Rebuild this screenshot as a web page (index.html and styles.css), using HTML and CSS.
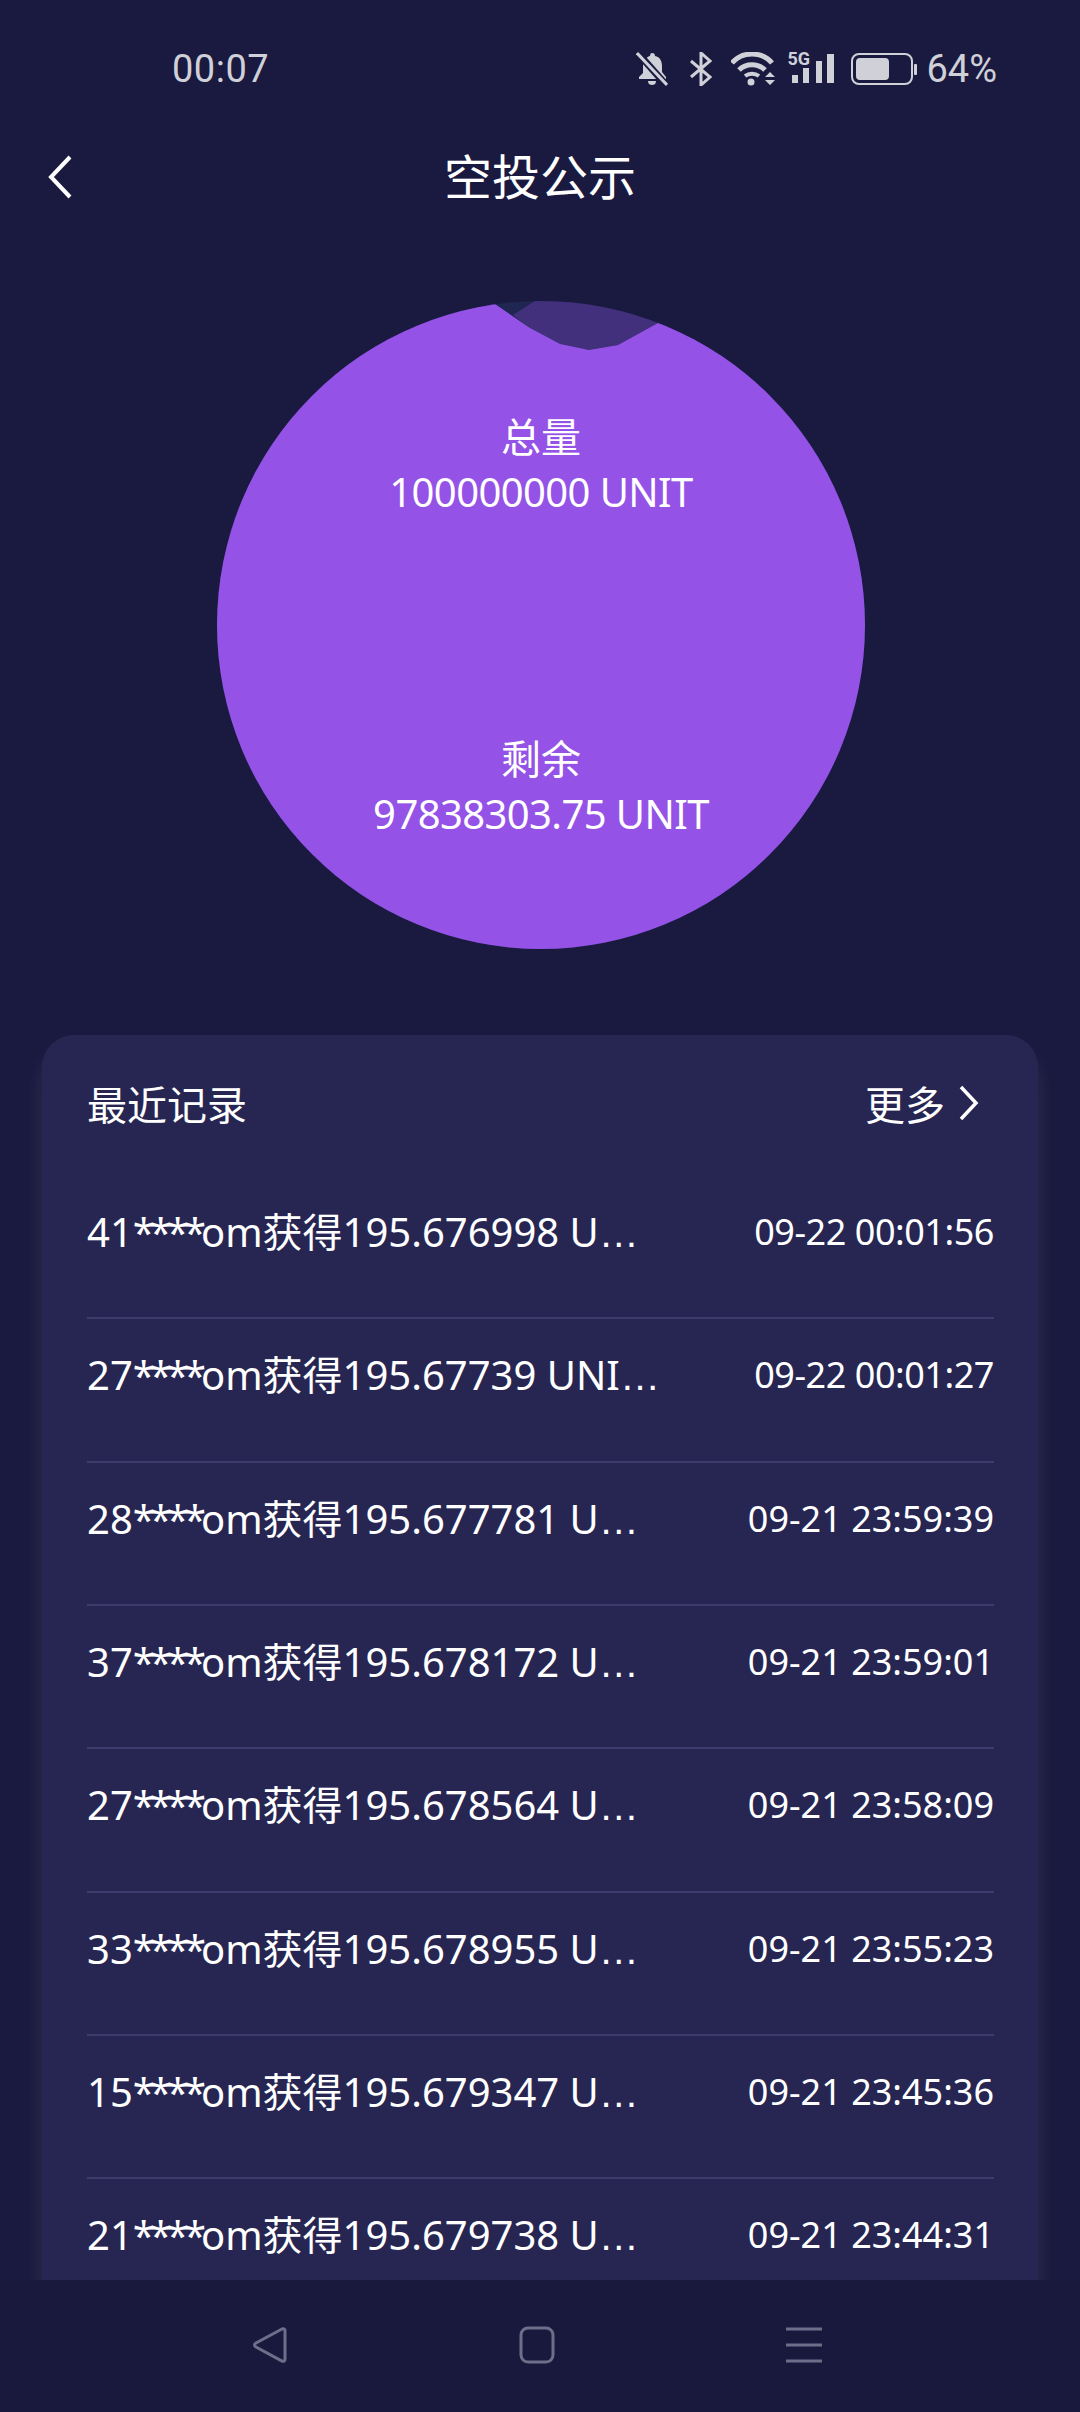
FILE: index.html

```html
<!DOCTYPE html>
<html lang="zh-CN">
<head>
    <meta charset="UTF-8">
    <meta name="viewport" content="width=device-width, initial-scale=1.0">
    <title>空投公示</title>
    <link rel="stylesheet" href="styles.css">
</head>
<body>
    <div class="status-bar">
        <span class="status-time">00:07</span>
        <div class="status-icons">
            <svg class="icon-bell" width="32" height="34" viewBox="0 0 32 34">
                <path d="M16 1c2 0 3 1 3 3 5 1 7 5 7 10v6l4 5v2H3v-2l4-4v-7c0-2 1-5 3-7 1-2 3-3 4-3 0-2 1-3 2-3z" fill="#d0d0d8"/>
                <path d="M12 29h8c0 3-2 4-4 4s-4-1-4-4z" fill="#d0d0d8"/>
                <path d="M1 0l30 34" stroke="#1a1a40" stroke-width="7"/>
                <path d="M1 1l30 32" stroke="#d0d0d8" stroke-width="3"/>
            </svg>
            <svg class="icon-bt" width="22" height="34" viewBox="0 0 22 34">
                <path d="M1 9l19 16-9 8V1l9 8L1 25" fill="none" stroke="#d0d0d8" stroke-width="3"/>
            </svg>
            <svg class="icon-wifi" width="44" height="34" viewBox="0 0 44 34">
                <path d="M1 11C11 -1 31 -1 41 11" fill="none" stroke="#d0d0d8" stroke-width="5"/>
                <path d="M8 18c7-7 19-7 26 0" fill="none" stroke="#d0d0d8" stroke-width="5"/>
                <path d="M14 24c4-3 10-3 14 0" fill="none" stroke="#d0d0d8" stroke-width="4"/>
                <circle cx="20" cy="30" r="3.5" fill="#d0d0d8"/>
                <path d="M34 25l5-5 5 5zM34 28l5 5 5-5z" fill="#d0d0d8"/>
            </svg>
            <div class="signal">
                <span class="signal-label">5G</span>
                <svg width="47" height="32" viewBox="0 0 47 32">
                    <rect x="5" y="22" width="6" height="8" fill="#d0d0d8"/>
                    <rect x="16" y="15" width="6" height="15" fill="#d0d0d8"/>
                    <rect x="29" y="8" width="6" height="22" fill="#d0d0d8"/>
                    <rect x="40" y="1" width="7" height="29" fill="#d0d0d8"/>
                </svg>
            </div>
            <svg class="icon-battery" width="67" height="32" viewBox="0 0 67 32">
                <rect x="1" y="1" width="60" height="30" rx="7" fill="none" stroke="#d0d0d8" stroke-width="2"/>
                <rect x="5" y="5" width="33" height="22" rx="4" fill="#d0d0d8"/>
                <rect x="63" y="11" width="3" height="11" rx="1" fill="#d0d0d8"/>
            </svg>
            <span class="status-percent">64%</span>
        </div>
    </div>

    <header class="title-bar">
        <svg class="back" width="26" height="44" viewBox="0 0 26 44">
            <path d="M23 2L4 22l19 20" fill="none" stroke="#fff" stroke-width="4"/>
        </svg>
        <h1>空投公示</h1>
    </header>

    <main class="page">
        <section class="chart">
            <svg class="chart-pie" width="648" height="648" viewBox="0 0 648 648">
                <circle cx="324" cy="324" r="324" fill="#1f2652"/>
                <clipPath id="disc"><circle cx="324" cy="324" r="324"/></clipPath>
                <g clip-path="url(#disc)">
                    <path d="M296 14L318 0H460V60L441 22L401 44L372 49L343 44L313 27z" fill="#42307c"/>
                    <path d="M0 0H274L278 3L313 27L343 43L372 49L401 44L441 22L648 22V648H0z" fill="#9452e6"/>
                </g>
            </svg>
            <div class="chart-label">
                <div>总量</div>
                <div class="chart-value">100000000 UNIT</div>
            </div>
            <div class="chart-label">
                <div>剩余</div>
                <div class="chart-value">97838303.75 UNIT</div>
            </div>
        </section>

        <section class="records">
            <div class="records-head">
                <span>最近记录</span>
                <a href="#" class="more">更多
                    <svg width="20" height="36" viewBox="0 0 20 36">
                        <path d="M2 2l15 16L2 34" fill="none" stroke="#fff" stroke-width="3.5"/>
                    </svg>
                </a>
            </div>
            <div class="record"><span class="record-text">41<span class="mask">****</span>om获得195.676998 U<span class="dots">…</span></span><span class="record-time tight">09-22 00:01:56</span></div>
            <div class="record"><span class="record-text">27<span class="mask">****</span>om获得195.67739 UNI<span class="dots">…</span></span><span class="record-time tight">09-22 00:01:27</span></div>
            <div class="record"><span class="record-text">28<span class="mask">****</span>om获得195.677781 U<span class="dots">…</span></span><span class="record-time">09-21 23:59:39</span></div>
            <div class="record"><span class="record-text">37<span class="mask">****</span>om获得195.678172 U<span class="dots">…</span></span><span class="record-time">09-21 23:59:01</span></div>
            <div class="record"><span class="record-text">27<span class="mask">****</span>om获得195.678564 U<span class="dots">…</span></span><span class="record-time">09-21 23:58:09</span></div>
            <div class="record"><span class="record-text">33<span class="mask">****</span>om获得195.678955 U<span class="dots">…</span></span><span class="record-time">09-21 23:55:23</span></div>
            <div class="record"><span class="record-text">15<span class="mask">****</span>om获得195.679347 U<span class="dots">…</span></span><span class="record-time">09-21 23:45:36</span></div>
            <div class="record"><span class="record-text">21<span class="mask">****</span>om获得195.679738 U<span class="dots">…</span></span><span class="record-time">09-21 23:44:31</span></div>
        </section>
    </main>

    <nav class="nav-bar">
        <svg width="36" height="38" viewBox="0 0 36 38">
            <path d="M30 3L4 17Q1 19 4 21L30 35Q33 36 33 33V5Q33 2 30 3z" fill="none" stroke="#6e6e8a" stroke-width="3"/>
        </svg>
        <svg width="36" height="38" viewBox="0 0 36 38">
            <rect x="2" y="2" width="32" height="34" rx="7" fill="none" stroke="#6e6e8a" stroke-width="3"/>
        </svg>
        <svg width="36" height="38" viewBox="0 0 36 38">
            <path d="M0 3h36M0 19h36M0 35h36" stroke="#6e6e8a" stroke-width="3"/>
        </svg>
    </nav>
</body>
</html>
```

FILE: styles.css

```css
* {
    box-sizing: border-box;
}

html, body {
    margin: 0;
    padding: 0;
}

body {
    width: 1080px;
    height: 2412px;
    display: flex;
    flex-direction: column;
    overflow: hidden;
    background-color: #1a1a40;
    color: #fff;
    font-family: "Noto Sans", "Noto Sans CJK SC", sans-serif;
}

.status-bar {
    height: 136px;
    flex: none;
    display: flex;
    align-items: center;
    justify-content: space-between;
    padding: 2px 83px 0 172px;
    color: #d0d0d8;
    font-family: Roboto, sans-serif;
    font-size: 38px;
}

.status-time {
    letter-spacing: 0.5px;
}

.status-icons {
    display: flex;
    align-items: center;
}

.icon-bell {
    margin-right: 22px;
}

.icon-bt {
    margin-right: 19px;
}

.icon-wifi {
    margin-right: 12px;
}

.signal {
    position: relative;
    margin-right: 17px;
    width: 47px;
    height: 32px;
}

.signal svg {
    display: block;
}

.signal-label {
    position: absolute;
    left: 0;
    top: -3px;
    font-size: 18px;
    font-weight: 700;
    line-height: 18px;
}

.icon-battery {
    margin-right: 8px;
}

.title-bar {
    position: relative;
    height: 82px;
    flex: none;
    display: flex;
    align-items: center;
    justify-content: center;
}

.title-bar h1 {
    margin: 0 0 6px;
    font-size: 48px;
    font-weight: 400;
}

.back {
    position: absolute;
    left: 47px;
    top: 19px;
}

.page {
    flex: 1;
    min-height: 0;
    overflow: hidden;
}

.chart {
    position: relative;
    width: 648px;
    height: 648px;
    margin: 83px 0 86px 217px;
    padding: 108px 0;
    display: flex;
    flex-direction: column;
    justify-content: space-between;
}

.chart-pie {
    position: absolute;
    left: 0;
    top: 0;
}

.chart-label {
    position: relative;
    text-align: center;
    font-size: 40px;
    line-height: 55px;
}

.chart-value {
    letter-spacing: -0.6px;
}

.records {
    margin: 0 42px;
    padding: 0 44px 0 45px;
    background-color: #272653;
    border-radius: 32px 32px 0 0;
    box-shadow: 0 16px 20px rgba(255, 255, 255, 0.09);
    height: 1400px;
}

.records-head {
    height: 141px;
    padding-bottom: 6px;
    display: flex;
    align-items: center;
    justify-content: space-between;
    font-size: 40px;
}

.more {
    display: flex;
    align-items: center;
    gap: 14px;
    padding-right: 15px;
    color: #fff;
    text-decoration: none;
}

.record {
    height: 143.33px;
    display: flex;
    justify-content: space-between;
    line-height: 112px;
    border-bottom: 2px solid #3c3c6c;
}

.record-text {
    font-size: 40px;
    white-space: nowrap;
}

.mask {
    letter-spacing: -5px;
}

.dots {
    font-family: "Liberation Sans", sans-serif;
}

.record-time {
    font-size: 36px;
}

.record-time.tight {
    letter-spacing: -0.45px;
}

.nav-bar {
    position: relative;
    height: 132px;
    flex: none;
    display: flex;
    align-items: flex-start;
    justify-content: center;
    gap: 231px;
    padding: 46px 7px 0 0;
    background-color: #19193e;
}
```
